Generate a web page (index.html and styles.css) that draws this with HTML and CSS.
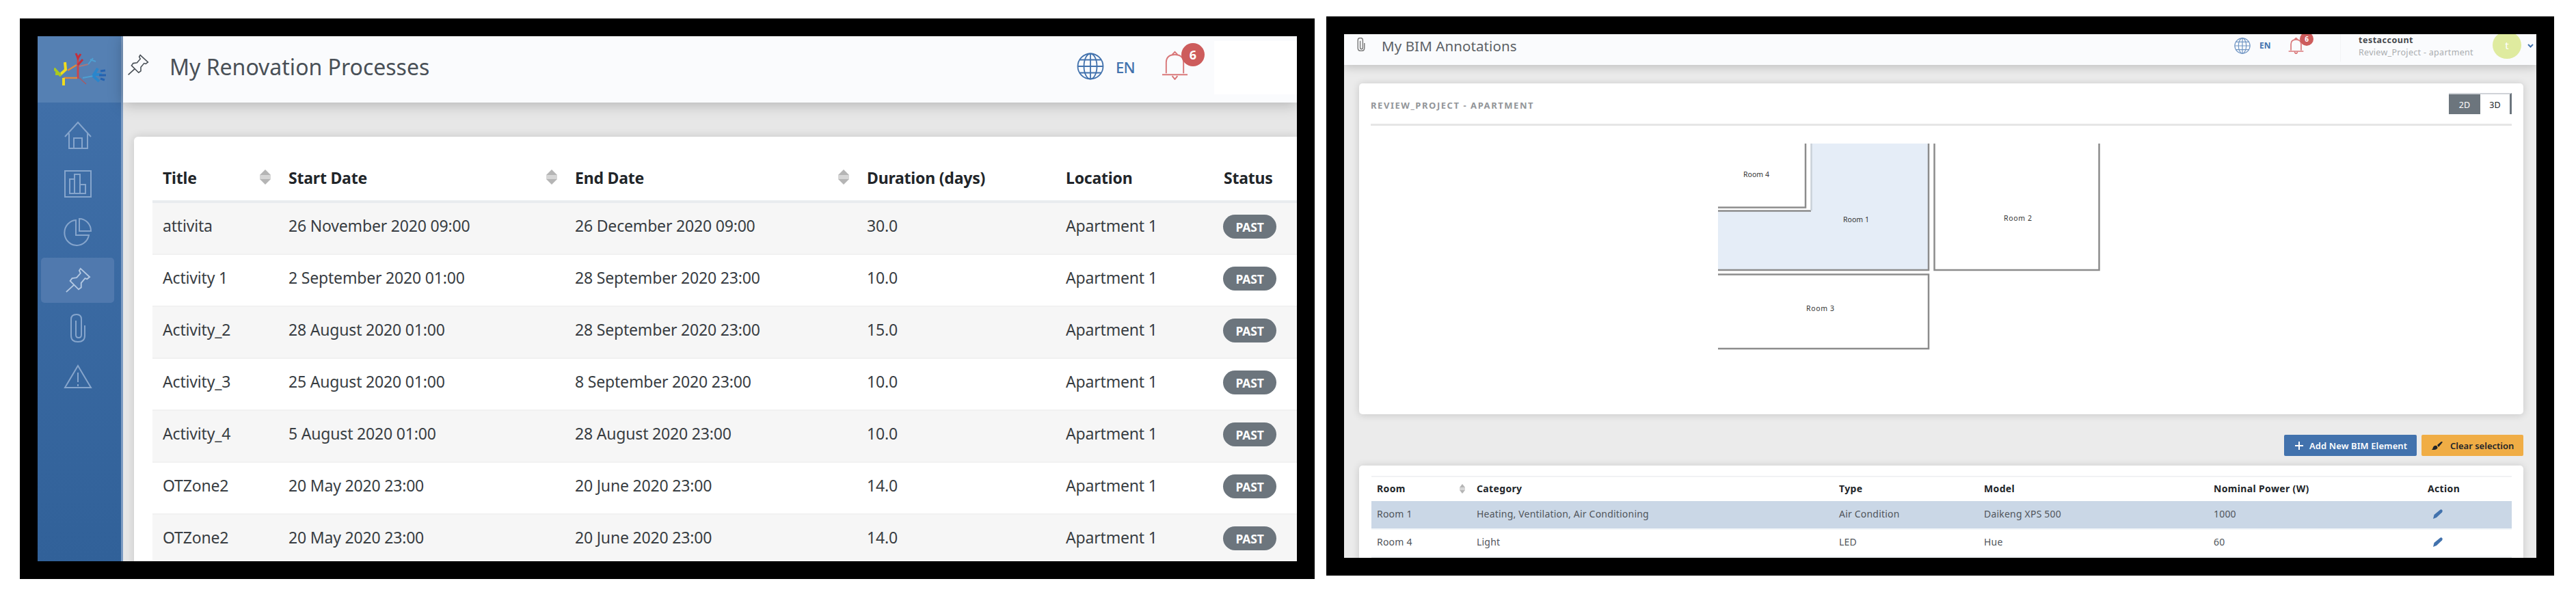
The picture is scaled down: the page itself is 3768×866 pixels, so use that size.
FILE: index.html
```html
<!DOCTYPE html>
<html lang="en">
<head>
    <meta charset="UTF-8">
    <meta name="viewport" content="width=device-width, initial-scale=1.0">
    <title>My Renovation Processes</title>
    <link rel="stylesheet" href="styles.css">
</head>
<body>
    <!-- shared icons -->
    <svg class="defs" width="0" height="0">
        <symbol id="pin" viewBox="0 0 40 40"><path d="M24 2 L38 15 L34 18 L31 17 L25 24 L25 31 L21 34 L8 21 L11 17 L18 16 L24 9 L22 5 Z M14 27 L2 38"/></symbol>
        <symbol id="clip" viewBox="0 0 22 42"><path d="M16 12 V31 Q16 35 12 35 Q8 35 8 31 M16 12 V8 Q16 1 9 1 Q1 1 1 8 V32 Q1 41 11 41 Q21 41 21 32 V17 M8 31 V10"/></symbol>
        <symbol id="globe" viewBox="0 0 40 40"><circle cx="20" cy="20" r="18.5"/><ellipse cx="20" cy="20" rx="9.5" ry="18.5"/><path d="M20 1 V39 M1 20 H39 M4.500 10.500 H35.500 M4.500 29.500 H35.500"/></symbol>
        <symbol id="bell" viewBox="0 0 40 42"><path d="M7 33 V17 Q7 5 20 5 Q33 5 33 17 V33 M1 35 H39 M16 5 L20 1 L24 5 M16 37 L20 42 L24 37"/></symbol>
        <symbol id="pencil" viewBox="0 0 14 14"><path d="M0 14 L1.500 8 L10 1 Q12 -0.500 13.500 1.500 Q14 3 13 4.500 L5 12 Z"/></symbol>
    </svg>

    <div class="frame frame-left">
        <nav class="sidebar">
            <div class="logo">
                <svg width="76" height="50" viewBox="0 0 76 50" fill="none">
                    <path d="M35 38 V4" stroke="#c9464c" stroke-width="3"/>
                    <path d="M35 18 L42 10 M32 1 L35 8 L39 2" stroke="#c2303e" stroke-width="3"/>
                    <path d="M33 18 L20 26 M34 37 L14 37" stroke="#e0883c" stroke-width="2.500"/>
                    <path d="M16 14 L17 25 L8 33 M14 37 L14 48" stroke="#f0dc1e" stroke-width="4"/>
                    <path d="M0 23 L10 34 M2 31 L10 31" stroke="#a9c920" stroke-width="4"/>
                    <path d="M37 37 L47 46" stroke="#a65a64" stroke-width="1.500"/>
                    <path d="M37 20 L50 17" stroke="#a8787f" stroke-width="2"/>
                    <path d="M50 17 L57 8 M53 10 L61 13 M42 37 L58 34" stroke="#4e9fd2" stroke-width="2"/>
                    <path d="M57 34 L64 23 M57 34 L66 42 M58 32 L70 32" stroke="#2a86cc" stroke-width="4"/>
                    <path d="M68 27 L75 26 M66 33 L76 33 M68 38 L74 40" stroke="#2462b0" stroke-width="3"/>
                </svg>
            </div>
            <ul class="menu">
                <li><svg width="42" height="42" viewBox="0 0 42 42"><path d="M2 23 L21 2 L40 23 M8 18 V40 H35 V18 M15 40 V25 H27 V40"/></svg></li>
                <li><svg width="42" height="42" viewBox="0 0 42 42"><path d="M2 2 H40 V40 H2 Z M9 35 V14 H16 V35 Z M16 35 V7 H24 V35 Z M24 35 V22 H32 V35 Z"/></svg></li>
                <li><svg width="42" height="42" viewBox="0 0 42 42"><path d="M18 4 A18 18.500 0 1 0 37 26 H18 Z M23 2 V20 H40 A17 18 0 0 0 23 2 Z"/></svg></li>
                <li class="active"><svg width="40" height="38"><use href="#pin"/></svg></li>
                <li><svg width="22" height="42"><use href="#clip"/></svg></li>
                <li><svg width="42" height="36" viewBox="0 0 42 36"><path d="M21 2 L40 34 H2 Z M21 12 V26 M21 29 V32"/></svg></li>
            </ul>
        </nav>
        <div class="main">
            <header class="topbar">
                <svg class="title-icon" width="32" height="32"><use href="#pin"/></svg>
                <h1>My Renovation Processes</h1>
                <svg class="globe" width="40" height="40"><use href="#globe"/></svg>
                <span class="lang">EN</span>
                <div class="bell">
                    <svg width="39" height="43"><use href="#bell"/></svg>
                    <span class="count">6</span>
                </div>
                <div class="account-blank"></div>
            </header>
            <div class="card">
                <table class="processes">
                    <colgroup><col class="c-title"><col class="c-start"><col class="c-end"><col class="c-duration"><col class="c-location"><col></colgroup>
                    <thead>
                        <tr>
                            <th>Title<i class="sort"></i></th>
                            <th>Start Date<i class="sort"></i></th>
                            <th>End Date<i class="sort"></i></th>
                            <th>Duration (days)</th>
                            <th>Location</th>
                            <th>Status</th>
                        </tr>
                    </thead>
                    <tbody>
                        <tr><td>attivita</td><td>26 November 2020 09:00</td><td>26 December 2020 09:00</td><td>30.0</td><td>Apartment 1</td><td><span class="badge">PAST</span></td></tr>
                        <tr><td>Activity 1</td><td>2 September 2020 01:00</td><td>28 September 2020 23:00</td><td>10.0</td><td>Apartment 1</td><td><span class="badge">PAST</span></td></tr>
                        <tr><td>Activity_2</td><td>28 August 2020 01:00</td><td>28 September 2020 23:00</td><td>15.0</td><td>Apartment 1</td><td><span class="badge">PAST</span></td></tr>
                        <tr><td>Activity_3</td><td>25 August 2020 01:00</td><td>8 September 2020 23:00</td><td>10.0</td><td>Apartment 1</td><td><span class="badge">PAST</span></td></tr>
                        <tr><td>Activity_4</td><td>5 August 2020 01:00</td><td>28 August 2020 23:00</td><td>10.0</td><td>Apartment 1</td><td><span class="badge">PAST</span></td></tr>
                        <tr><td>OTZone2</td><td>20 May 2020 23:00</td><td>20 June 2020 23:00</td><td>14.0</td><td>Apartment 1</td><td><span class="badge">PAST</span></td></tr>
                        <tr><td>OTZone2</td><td>20 May 2020 23:00</td><td>20 June 2020 23:00</td><td>14.0</td><td>Apartment 1</td><td><span class="badge">PAST</span></td></tr>
                    </tbody>
                </table>
            </div>
        </div>
    </div>

    <div class="frame frame-right">
        <header class="topbar-small">
            <svg class="title-icon" width="12" height="20"><use href="#clip"/></svg>
            <h1>My BIM Annotations</h1>
            <svg class="globe" width="26" height="24"><use href="#globe"/></svg>
            <span class="lang">EN</span>
            <div class="bell">
                <svg width="23" height="24"><use href="#bell"/></svg>
                <span class="count">6</span>
            </div>
            <div class="account">
                <strong>testaccount</strong>
                <span>Review_Project - apartment</span>
            </div>
            <div class="avatar">t</div>
            <svg class="caret" width="9" height="6" viewBox="0 0 9 6"><path d="M1 1 L4.500 4.500 L8 1"/></svg>
        </header>
        <section class="panel plan">
            <div class="panel-head">
                <h2>REVIEW_PROJECT - APARTMENT</h2>
                <div class="toggle"><span class="on">2D</span><span>3D</span></div>
            </div>
            <svg class="floor" width="560" height="304" viewBox="0 0 560 304">
                <path d="M0 93.500 H128 V0"/>
                <path class="selected" d="M0 98.500 H136.500 V0 H308 V185 H0 Z"/>
                <path d="M0 98.500 H136 M308 0 V185 H0"/>
                <path class="light" d="M136.500 98 V0"/>
                <path d="M316.500 0 V185 H557.500 V0"/>
                <path d="M0 191.500 H308 V300 H0"/>
                <text x="37" y="49" textLength="38">Room 4</text>
                <text x="183" y="115" textLength="38">Room 1</text>
                <text x="418" y="113" textLength="41">Room 2</text>
                <text x="129" y="245" textLength="41">Room 3</text>
            </svg>
        </section>
        <div class="actions">
            <button class="btn-primary"><svg width="12" height="12" viewBox="0 0 12 12"><path d="M6 0 V12 M0 6 H12"/></svg>Add New BIM Element</button>
            <button class="btn-warning"><svg width="16" height="12" viewBox="0 0 16 12"><path d="M0 12 Q2 10 2 8 Q4 5 7 6 Q10 9 7 11 Q4 12.500 0 12 Z M8 5 L14 0 Q17 0 15 2 L10 8 Z"/></svg>Clear selection</button>
        </div>
        <section class="panel elements-panel">
            <table class="elements">
                <colgroup><col class="e-room"><col class="e-category"><col class="e-type"><col class="e-model"><col class="e-power"><col></colgroup>
                <thead>
                    <tr><th>Room<i class="sort"></i></th><th>Category</th><th>Type</th><th>Model</th><th>Nominal Power (W)</th><th>Action</th></tr>
                </thead>
                <tbody>
                    <tr class="selected"><td>Room 1</td><td>Heating, Ventilation, Air Conditioning</td><td>Air Condition</td><td>Daikeng XPS 500</td><td>1000</td><td><svg width="14" height="14"><use href="#pencil"/></svg></td></tr>
                    <tr><td>Room 4</td><td>Light</td><td>LED</td><td>Hue</td><td>60</td><td><svg width="14" height="14"><use href="#pencil"/></svg></td></tr>
                    <tr class="next"><td colspan="6"></td></tr>
                </tbody>
            </table>
        </section>
    </div>
</body>
</html>
```
FILE: styles.css
```css
* {
    box-sizing: border-box;
}
body {
    margin: 0;
    height: 866px;
    background: #fff;
    display: flex;
    align-items: flex-start;
    overflow: hidden;
    font-family: "Noto Sans", "Open Sans", sans-serif;
    color: #212529;
}
.defs {
    position: absolute;
}
h1, h2 {
    margin: 0;
    font-weight: normal;
}
svg {
    display: block;
    flex: none;
    fill: none;
    stroke: currentColor;
}
.frame {
    border: 26px solid #000;
    overflow: hidden;
    flex: none;
    background: #e7e7e7;
}
.frame-left {
    width: 1894px;
    height: 820px;
    margin: 27px 0 0 29px;
    display: flex;
}
.frame-right {
    width: 1796px;
    height: 818px;
    margin: 24px 0 0 17px;
    background: #ebebeb;
}

/* sidebar */
.sidebar {
    width: 125px;
    flex: none;
    background: linear-gradient(#4271aa, #316199);
    border-right: 3px solid #7d9cc2;
}
.logo {
    height: 97px;
    background: #5580b3;
    padding: 24px 0 0 24px;
}
.menu {
    list-style: none;
    margin: 0;
    padding: 15px 10px 0 5px;
    color: #86a5cc;
}
.menu li {
    height: 66px;
    margin-bottom: 4.500px;
    display: flex;
    align-items: center;
    justify-content: center;
    border-radius: 5px;
    stroke-width: 2;
}
.menu .active {
    background: #5079ae;
    color: #b3c8e2;
}

/* left page */
.main {
    flex: 1;
    min-width: 0;
}
.topbar {
    height: 97px;
    background: #fafbfd;
    display: flex;
    align-items: flex-start;
    box-shadow: 0 2px 20px rgba(0, 0, 0, 0.25);
    position: relative;
    color: #495057;
}
.topbar .title-icon {
    margin: 26px 0 0 6px;
    stroke-width: 2;
}
.topbar h1 {
    width: 1327px;
    margin-left: 30px;
    padding-top: 22px;
    font-size: 32px;
    line-height: 46px;
}
.globe {
    color: #4272ad;
}
.topbar .globe {
    margin-top: 24px;
    stroke-width: 1.800;
}
.lang {
    color: #4272ad;
}
.topbar .lang {
    width: 67px;
    padding: 30px 0 0 17px;
    font-size: 22px;
    line-height: 30px;
    font-weight: 500;
    letter-spacing: -0.700px;
}
.bell {
    position: relative;
    color: #d9787a;
}
.topbar .bell {
    width: 76px;
    padding: 21px 0 0 17px;
    stroke-width: 2;
}
.count {
    position: absolute;
    border-radius: 50%;
    background: #cd5c5c;
    color: #fff;
    text-align: center;
    font-weight: bold;
}
.topbar .count {
    left: 46px;
    top: 10px;
    width: 34px;
    height: 34px;
    font-size: 18px;
    line-height: 34px;
}
.account-blank {
    flex: 1;
    height: 78px;
    margin: 7px 0 0 18px;
    background: #fff;
}
.card {
    margin: 50px 0 0 16px;
    height: 640px;
    padding: 16px 0 0 27px;
    background: #fff;
    border-radius: 6px 0 0 0;
    box-shadow: 0 0 14px rgba(0, 0, 0, 0.14);
}
table {
    width: 100%;
    table-layout: fixed;
    border-collapse: separate;
    border-spacing: 0;
}
th, td {
    text-align: left;
    white-space: nowrap;
}
.processes th, .processes td {
    padding: 0 0 0 15px;
    font-size: 23px;
}
.processes th {
    height: 81px;
    padding-top: 11px;
    border-bottom: 4px solid #e9ecef;
    letter-spacing: -0.200px;
}
.processes td {
    height: 76px;
    padding-bottom: 9px;
    border-bottom: 2px solid #f1f1f1;
    letter-spacing: -0.180px;
    color: #383d42;
}
.processes tbody tr:nth-child(odd) {
    background: #f6f6f6;
}
.c-title { width: 184px; }
.c-start { width: 419px; }
.c-end { width: 427px; }
.c-duration { width: 291px; }
.c-location { width: 231px; }
.sort {
    float: right;
    width: 16px;
    height: 22px;
    background: linear-gradient(#b5b5b5 36%, #d6d6d6 36%, #d6d6d6 64%, #b5b5b5 64%);
    clip-path: polygon(50% 0, 100% 36%, 100% 64%, 50% 100%, 0 64%, 0 36%);
}
.processes .sort {
    margin: 4px 11px 0 0;
}
.badge {
    display: inline-block;
    width: 78px;
    height: 35px;
    border-radius: 18px;
    background: #6c757d;
    color: #fff;
    font-size: 17.500px;
    font-weight: bold;
    line-height: 36px;
    text-align: center;
    vertical-align: middle;
    margin: 4px 0 0 -1px;
}

/* right page */
.topbar-small {
    height: 45px;
    background: #fafbfd;
    display: flex;
    align-items: flex-start;
    position: relative;
    box-shadow: 0 2px 14px rgba(0, 0, 0, 0.22);
    color: #5c6166;
}
.topbar-small .title-icon {
    margin: 5px 0 0 19px;
    color: #777;
    stroke-width: 3;
}
.topbar-small h1 {
    width: 1246px;
    margin-left: 24px;
    padding-top: 2px;
    font-size: 20.500px;
    line-height: 30px;
    letter-spacing: 0.100px;
}
.topbar-small .globe {
    margin-top: 5px;
    stroke-width: 2;
    color: #7196c4;
}
.topbar-small .lang {
    width: 43px;
    padding: 8px 0 0 12px;
    font-size: 12px;
    line-height: 18px;
    font-weight: bold;
}
.topbar-small .bell {
    width: 77px;
    height: 40px;
    padding-top: 5px;
    stroke-width: 3;
    border-right: 1px solid #f2f3f5;
    margin-left: -4px;
}
.topbar-small .bell {
    padding-left: 15px;
    width: 92px;
}
.topbar-small .count {
    left: 32px;
    top: -3px;
    width: 20px;
    height: 20px;
    font-size: 10px;
    line-height: 21px;
}
.account {
    flex: none;
    width: 222px;
    padding: 0 0 0 26px;
    font-size: 12.500px;
    line-height: 18px;
    color: #aaadb0;
    display: flex;
    flex-direction: column;
    white-space: nowrap;
}
.account strong {
    color: #45494d;
    letter-spacing: 0.500px;
}
.account span {
    letter-spacing: 0.300px;
}
.avatar {
    flex: none;
    width: 42px;
    height: 40px;
    margin-top: -4px;
    border-radius: 50%;
    background: #dfeb9f;
    color: #fff;
    font-size: 15px;
    line-height: 40px;
    text-align: center;
}
.caret {
    margin: 14px 0 0 9px;
    color: #4272ad;
    stroke-width: 2;
}
.panel {
    margin: 0 19px 0 22px;
    background: #fff;
    border-radius: 5px;
    box-shadow: 0 1px 12px rgba(0, 0, 0, 0.16);
}
.plan {
    margin-top: 27px;
    height: 484px;
    padding: 0 17px;
}
.panel-head {
    height: 62px;
    border-bottom: 3px solid #e6e6e6;
    display: flex;
    justify-content: space-between;
    align-items: flex-start;
}
.panel-head h2 {
    padding-top: 23px;
    font-size: 13px;
    font-weight: bold;
    line-height: 18px;
    color: #929599;
    letter-spacing: 1.550px;
}
.toggle {
    display: flex;
    width: 92px;
    height: 31px;
    margin-top: 14px;
    border-top: 2px solid #d0d3d8;
    border-right: 3px solid #6c757d;
    font-size: 12.500px;
    line-height: 31px;
    text-align: center;
}
.toggle span {
    flex: 1;
}
.toggle .on {
    flex: none;
    width: 46px;
    background: #6c757d;
    color: #fff;
}
.floor {
    margin: 26px 0 0 508px;
    color: #8c8c8c;
    stroke-width: 2.500;
}
.floor .selected {
    fill: #e5edf7;
    stroke: none;
}
.floor .light {
    stroke: #c9d0d8;
}
.floor text {
    fill: #333;
    stroke: none;
    font-size: 10.500px;
}
.actions {
    display: flex;
    justify-content: flex-end;
    gap: 7px;
    margin: 30px 19px 14px 0;
}
.actions button {
    height: 31px;
    padding: 0;
    border: none;
    border-radius: 2px;
    font: 600 13px "Noto Sans", sans-serif;
    display: flex;
    align-items: center;
    white-space: nowrap;
}
.actions .btn-primary {
    width: 194px;
    padding-left: 16px;
    gap: 9px;
    background: #4272ad;
    color: #fff;
    stroke-width: 2;
    letter-spacing: 0.100px;
}
.actions .btn-warning {
    width: 149px;
    padding-left: 15px;
    gap: 11px;
    background: #f0ad45;
    color: #212529;
}
.btn-warning svg, .elements td svg {
    fill: currentColor;
    stroke: none;
}
.elements-panel {
    height: 160px;
    padding: 15px 17px 0 18px;
}
.elements th {
    height: 37px;
    padding: 0 0 2px 8px;
    border-top: 2px solid #f1f2f4;
    font-size: 14px;
    letter-spacing: 0.350px;
}
.elements td {
    height: 40px;
    padding: 0 0 4px 8px;
    border-bottom: 2px solid #f3f6f9;
    font-size: 14px;
    letter-spacing: 0.200px;
    color: #50555b;
}
.elements .selected td {
    height: 42px;
    padding-bottom: 4px;
}
.elements .selected {
    background: #cad7e6;
}
.elements .next td {
    background: #e6e6e6;
}
.elements td svg {
    margin: 2px 0 0 8px;
    color: #4272ad;
}
.elements .sort {
    width: 8px;
    height: 14px;
    margin: 3px 9px 0 0;
}
.e-room { width: 146px; }
.e-category { width: 530px; }
.e-type { width: 212px; }
.e-model { width: 336px; }
.e-power { width: 313px; }
```
